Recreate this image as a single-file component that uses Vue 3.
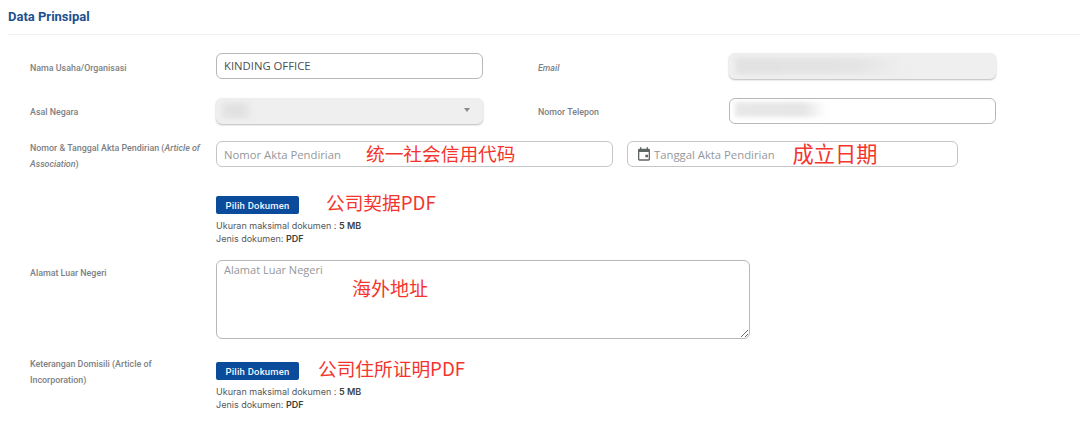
<template>
  <div class="page">
    <h2 class="title">Data Prinsipal</h2>

    <div class="row first">
      <label class="label label-top">Nama Usaha/Organisasi</label>
      <input class="field half name-input" type="text" value="KINDING OFFICE" />
      <label class="label label-mid label-top"><em>Email</em></label>
      <div class="field half disabled">
        <span class="blur blur-email"></span>
      </div>
    </div>

    <div class="row second">
      <label class="label">Asal Negara</label>
      <div class="field half disabled">
        <span class="blur blur-country"></span>
        <span class="caret"></span>
      </div>
      <label class="label label-mid">Nomor Telepon</label>
      <div class="field half">
        <span class="blur blur-phone"></span>
      </div>
    </div>

    <div class="row third">
      <label class="label two-line">Nomor &amp; Tanggal Akta Pendirian (<em>Article of</em> <em>Association</em>)</label>
      <div class="note-wrap">
        <input class="field akta" type="text" placeholder="Nomor Akta Pendirian" />
        <span class="note note-akta">统一社会信用代码</span>
      </div>
      <div class="field tanggal">
        <svg class="cal" viewBox="0 0 24 24" width="16" height="16">
          <path fill="#5f6664" d="M19 4h-1V2h-2v2H8V2H6v2H5a2 2 0 0 0-2 2v14a2 2 0 0 0 2 2h14a2 2 0 0 0 2-2V6a2 2 0 0 0-2-2zm0 16H5V9h14v11zm-5-7h4v4h-4v-4z" />
        </svg>
        <span class="ph">Tanggal Akta Pendirian</span>
        <span class="note note-tanggal">成立日期</span>
      </div>
    </div>

    <div class="row upload-one">
      <div class="label"></div>
      <div>
        <div class="upload-line">
          <button class="pick" type="button">Pilih Dokumen</button>
          <span class="note note-doc">公司契据PDF</span>
        </div>
        <p class="hint">Ukuran maksimal dokumen : <b>5 MB</b><br />Jenis dokumen: <b>PDF</b></p>
      </div>
    </div>

    <div class="row address">
      <label class="label label-addr">Alamat Luar Negeri</label>
      <div class="note-wrap">
        <textarea class="field area" placeholder="Alamat Luar Negeri"></textarea>
        <span class="note note-addr">海外地址</span>
      </div>
    </div>

    <div class="row upload-two">
      <label class="label two-line domisili">Keterangan Domisili (Article of Incorporation)</label>
      <div>
        <div class="upload-line">
          <button class="pick" type="button">Pilih Dokumen</button>
          <span class="note note-domisili">公司住所证明PDF</span>
        </div>
        <p class="hint">Ukuran maksimal dokumen : <b>5 MB</b><br />Jenis dokumen: <b>PDF</b></p>
      </div>
    </div>
  </div>
</template>

<script setup>
</script>

<style>
body {
  background: #fff;
}
</style>

<style scoped>
.page {
  width: 1080px;
  height: 443px;
  overflow: hidden;
  background: #fff;
  font-family: Roboto, "Liberation Sans", sans-serif;
}

.title {
  margin: 0 0 0 8px;
  height: 35px;
  padding-top: 9px;
  box-sizing: border-box;
  border-bottom: 1px solid #f2f2f2;
  font-size: 13px;
  line-height: 15px;
  font-weight: 700;
  color: #22508f;
}

.row {
  display: flex;
  align-items: flex-start;
  padding-left: 30px;
}
.first { margin-top: 18px; }
.second { margin-top: 19px; }
.third { margin-top: 17px; }
.upload-one { margin-top: 24px; }
.address { margin-top: 15px; }
.upload-two { margin-top: 23px; }

.label {
  flex: none;
  width: 186px;
  box-sizing: border-box;
  padding-right: 12px;
  font-size: 8.9px;
  line-height: 16px;
  padding-top: 6px;
  font-weight: 500;
  color: #7d8184;
}
.label-top {
  padding-top: 7px;
}
.label-mid {
  width: 191px;
  margin-left: 55px;
}
.two-line {
  padding-top: 0;
  margin-top: -1px;
}
.domisili {
  margin-top: -6px;
}
.label-addr {
  padding-top: 5px;
}

.field {
  display: block;
  box-sizing: border-box;
  height: 26px;
  border: 1px solid #b5b7ba;
  border-radius: 6px;
  background: #fff;
  padding: 0 7px;
  font-family: "Open Sans", "Liberation Sans", sans-serif;
  font-size: 11.3px;
  color: #4c4f52;
  outline: none;
}
.field::placeholder {
  color: #94989a;
  opacity: 1;
}
.name-input {
  padding-bottom: 2px;
}
.half {
  width: 267px;
  flex: none;
  position: relative;
  overflow: hidden;
}
.disabled {
  background: #efefef;
  border: none;
  box-shadow: 0 1px 2px rgba(0, 0, 0, 0.28);
}

.blur {
  position: absolute;
  display: block;
  filter: blur(2px);
}
.blur-email {
  left: 7px;
  top: 5px;
  width: 170px;
  height: 16px;
  background: linear-gradient(90deg, #e2e2e2 0%, #e4e4e4 70%, #efefef 100%);
}
.blur-country {
  left: 6px;
  top: 5px;
  width: 32px;
  height: 15px;
  background: linear-gradient(90deg, #e4e4e4 0%, #e0e0e0 60%, #efefef 100%);
}
.blur-phone {
  left: 5px;
  top: 3px;
  width: 92px;
  height: 15px;
  background: linear-gradient(90deg, #e8e8e8 0%, #e6e6e6 75%, #ffffff 100%);
}

.caret {
  position: absolute;
  right: 13px;
  top: 10px;
  border-left: 3.5px solid transparent;
  border-right: 3.5px solid transparent;
  border-top: 4px solid #8a8a8a;
}

.note-wrap {
  position: relative;
}
.akta {
  width: 397px;
  border-color: #c4c6c8;
}
.tanggal {
  display: flex;
  align-items: center;
  flex: none;
  width: 331px;
  margin-left: 14px;
  padding: 0 0 0 8px;
  border-color: #c4c6c8;
  gap: 2px;
}
.ph {
  color: #94989a;
  white-space: nowrap;
}
.cal {
  flex: none;
}

.note {
  color: #f4352e;
  font-family: "Noto Sans CJK SC", "Liberation Sans", sans-serif;
  font-size: 18.7px;
  line-height: 24px;
  white-space: nowrap;
}
.note-akta {
  position: absolute;
  left: 150px;
  top: 0;
}
.note-tanggal {
  margin-left: 16px;
  margin-top: -2px;
  font-size: 21.2px;
}
.note-addr {
  position: absolute;
  left: 136px;
  top: 16px;
  font-size: 19px;
}
.note-doc {
  margin-left: 27px;
  margin-top: -6px;
}
.note-domisili {
  margin-left: 19px;
  margin-top: -6px;
}

.upload-line {
  display: flex;
  align-items: center;
  height: 18px;
}
.pick {
  flex: none;
  width: 83px;
  height: 18px;
  padding: 0;
  border: none;
  border-radius: 2px;
  background: #0b4b9b;
  color: #f2f5fa;
  font-family: Roboto, "Liberation Sans", sans-serif;
  font-size: 9.5px;
  font-weight: 500;
  letter-spacing: 0.2px;
}
.hint {
  margin: 5px 0 0;
  font-family: Inter, "Liberation Sans", sans-serif;
  font-size: 9px;
  line-height: 13px;
  color: #55585c;
}
.hint b {
  font-weight: 600;
  color: #3c3f42;
}

.area {
  width: 534px;
  height: 79px;
  padding: 1px 7px;
  resize: both;
  font-size: 11px;
}
</style>
